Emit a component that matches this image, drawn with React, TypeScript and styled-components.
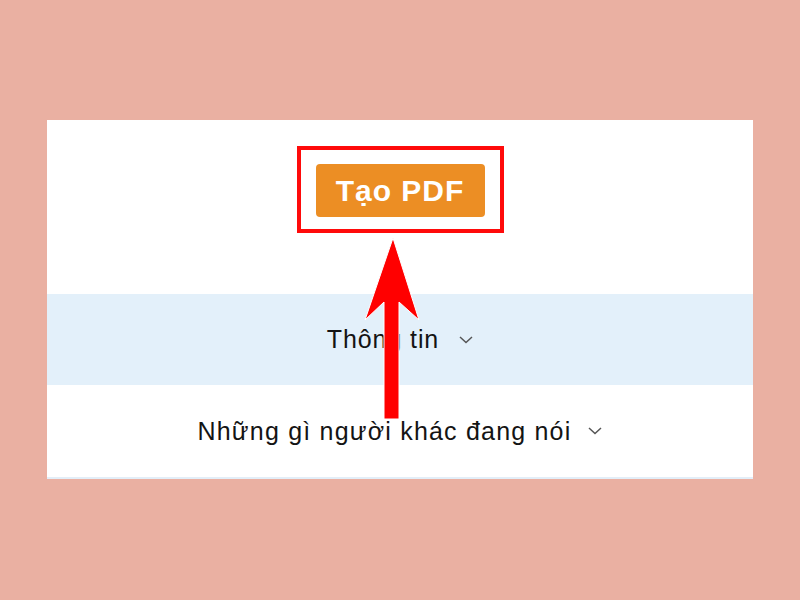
import React from 'react';
import styled, { createGlobalStyle } from 'styled-components';

const GlobalStyle = createGlobalStyle`
  html, body {
    margin: 0;
    padding: 0;
    background: #EAB0A2;
    font-family: 'Liberation Sans', Arial, sans-serif;
  }
`;

const Page = styled.div`
  width: 800px;
  height: 600px;
  padding-top: 120px;
  box-sizing: border-box;
`;

const Panel = styled.div`
  position: relative;
  width: 706px;
  margin: 0 auto;
  background: #ffffff;
  border-bottom: 2px solid #E3EEF8;
`;

const Top = styled.div`
  height: 174px;
  display: flex;
  justify-content: center;
  align-items: flex-start;
  padding-top: 26px;
  box-sizing: border-box;
`;

const Highlight = styled.div`
  border: 4px solid #FF0A0A;
  padding: 14px 15px 12px;
  display: flex;
`;

const PdfButton = styled.button`
  width: 169px;
  height: 53px;
  border: none;
  border-radius: 4px;
  background: #EC8E24;
  color: #ffffff;
  font-family: 'Liberation Sans', Arial, sans-serif;
  font-weight: 700;
  font-size: 30px;
  letter-spacing: 1px;
  padding: 0;
  cursor: pointer;
`;

const Row = styled.div<{ $shade?: boolean; $h: number }>`
  height: ${p => p.$h}px;
  background: ${p => (p.$shade ? '#E3F0FA' : '#ffffff')};
  display: flex;
  align-items: center;
  justify-content: center;
  gap: ${p => (p.$shade ? 20 : 17)}px;
`;

const Label = styled.span<{ $size: number; $spacing: number }>`
  font-size: ${p => p.$size}px;
  color: #141414;
  letter-spacing: ${p => p.$spacing}px;
`;

const Overlay = styled.svg`
  position: absolute;
  left: 0;
  top: 0;
  pointer-events: none;
`;

const Chevron = () => (
  <svg width="14" height="8" viewBox="0 0 14 8">
    <polyline points="1,1 7,6.5 13,1" fill="none" stroke="#555" strokeWidth="1.5" />
  </svg>
);

export default function App() {
  return (
    <Page>
      <GlobalStyle />
      <Panel>
        <Top>
          <Highlight>
            <PdfButton>Tạo PDF</PdfButton>
          </Highlight>
        </Top>
        <Row $shade $h={91}>
          <Label $size={25} $spacing={0.9}>Thông tin</Label>
          <Chevron />
        </Row>
        <Row $h={92}>
          <Label $size={25} $spacing={1.2}>Những gì người khác đang nói</Label>
          <Chevron />
        </Row>
        <Overlay width="706" height="360" viewBox="0 0 706 360">
          <polygon
            points="346,118 372,200 352,182 352,299 337,299 337,182 318,200"
            fill="#FF0000"
            stroke="#ffffff"
            strokeWidth="1"
            strokeLinejoin="miter"
          />
        </Overlay>
      </Panel>
    </Page>
  );
}
